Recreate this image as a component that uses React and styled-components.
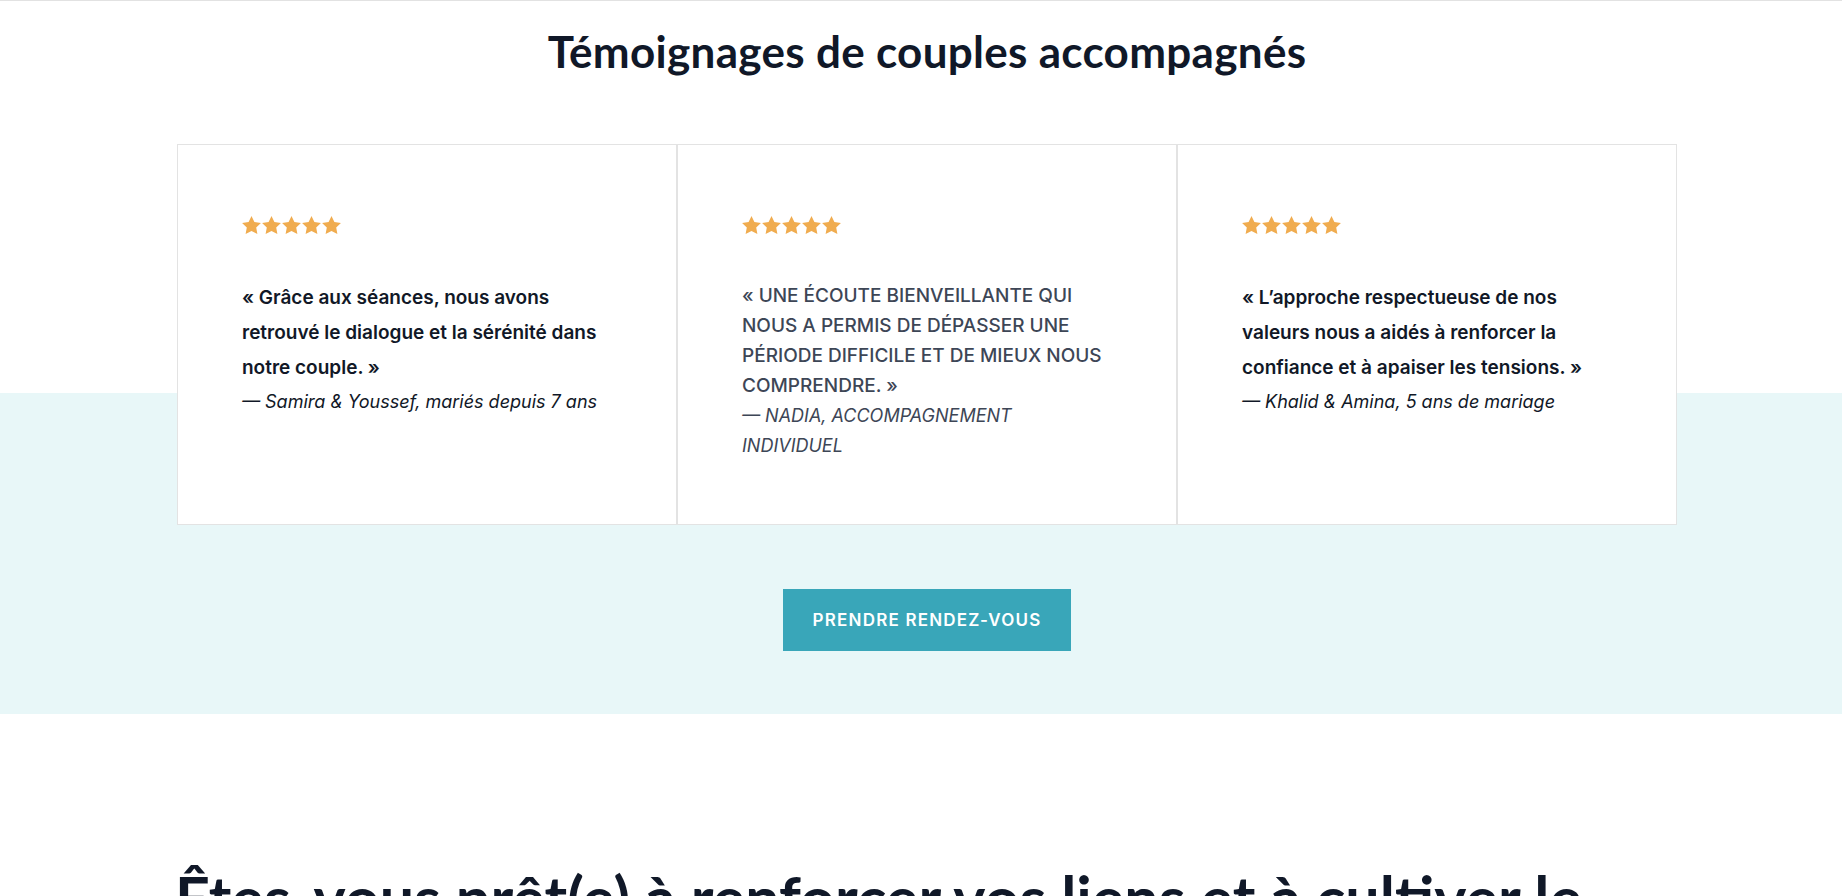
import React from 'react'
import styled, { createGlobalStyle } from 'styled-components'

const GlobalStyle = createGlobalStyle`
  body {
    margin: 0;
    background: #ffffff;
    font-family: Inter, "Liberation Sans", sans-serif;
    color: #111827;
  }
`

const Page = styled.div`
  border-top: 1px solid #e2e2e2;
  overflow: hidden;
  height: 895px;
`

const TestimonialSection = styled.section`
  background: linear-gradient(to bottom, #ffffff 0, #ffffff 392px, #e8f7f8 392px);
  padding: 0 0 63px 12px;
  display: flex;
  flex-direction: column;
  align-items: center;
`

const Title = styled.h2`
  margin: 0;
  padding-top: 22px;
  font-family: Lato, "Liberation Sans", sans-serif;
  font-weight: 700;
  font-size: 44px;
  line-height: 56px;
  color: #101828;
  letter-spacing: 0.3px;
`

const CardGrid = styled.div`
  display: grid;
  grid-template-columns: repeat(3, 500px);
  margin-top: 65px;
`

const Card = styled.article`
  background: #ffffff;
  border: 1px solid #e3e3e3;
  height: 381px;
  box-sizing: border-box;
  padding: 71px 64px 0;
`

const Stars = styled.div`
  display: flex;
  gap: 1px;
  height: 19px;
`

const Quote = styled.p`
  margin: ${p => (p.$caps ? '46px' : '45px')} 0 0;
  font-size: 19px;
  font-weight: ${p => (p.$caps ? 500 : 600)};
  line-height: ${p => (p.$caps ? '30px' : '35px')};
  color: ${p => (p.$caps ? '#3d4656' : '#111827')};
  text-transform: ${p => (p.$caps ? 'uppercase' : 'none')};
`

const Author = styled.p`
  margin: 0;
  font-size: 18px;
  font-style: italic;
  font-weight: 400;
  line-height: ${p => (p.$caps ? '30px' : '34px')};
  color: ${p => (p.$caps ? '#3d4656' : '#111827')};
  text-transform: ${p => (p.$caps ? 'uppercase' : 'none')};
`

const Button = styled.a`
  margin-top: 64px;
  width: 288px;
  height: 62px;
  display: flex;
  align-items: center;
  justify-content: center;
  background: #39a6b9;
  color: #ffffff;
  font-size: 17px;
  font-weight: 600;
  letter-spacing: 1.2px;
  text-decoration: none;
  text-transform: uppercase;
`

const NextSection = styled.section`
  padding: 148px 0 0 175px;
`

const NextTitle = styled.h2`
  margin: 0;
  font-family: Lato, "Liberation Sans", sans-serif;
  font-weight: 700;
  font-size: 61px;
  line-height: 72px;
  color: #101828;
`

const Star = () => (
  <svg width="19" height="19" viewBox="1.5 1.5 21 21">
    <path
      fill="#f0ac4f"
      d="M12 1.6l3.2 6.6 7.2 1-5.2 5.1 1.3 7.2L12 18.1l-6.5 3.4 1.3-7.2L1.6 9.2l7.2-1z"
    />
  </svg>
)

const testimonials = [
  {
    quote: '« Grâce aux séances, nous avons retrouvé le dialogue et la sérénité dans notre couple. »',
    author: '— Samira & Youssef, mariés depuis 7 ans',
  },
  {
    quote: '« Une écoute bienveillante qui nous a permis de dépasser une période difficile et de mieux nous comprendre. »',
    author: '— Nadia, accompagnement individuel',
    caps: true,
  },
  {
    quote: '« L’approche respectueuse de nos valeurs nous a aidés à renforcer la confiance et à apaiser les tensions. »',
    author: '— Khalid & Amina, 5 ans de mariage',
  },
]

export default function App() {
  return (
    <Page>
      <GlobalStyle />
      <TestimonialSection>
        <Title>Témoignages de couples accompagnés</Title>
        <CardGrid>
          {testimonials.map(t => (
            <Card key={t.author}>
              <Stars>
                {[0, 1, 2, 3, 4].map(i => <Star key={i} />)}
              </Stars>
              <Quote $caps={t.caps}>{t.quote}</Quote>
              <Author $caps={t.caps}>{t.author}</Author>
            </Card>
          ))}
        </CardGrid>
        <Button href="#">Prendre rendez-vous</Button>
      </TestimonialSection>
      <NextSection>
        <NextTitle>Êtes-vous prêt(e) à renforcer vos liens et à cultiver le</NextTitle>
      </NextSection>
    </Page>
  )
}
